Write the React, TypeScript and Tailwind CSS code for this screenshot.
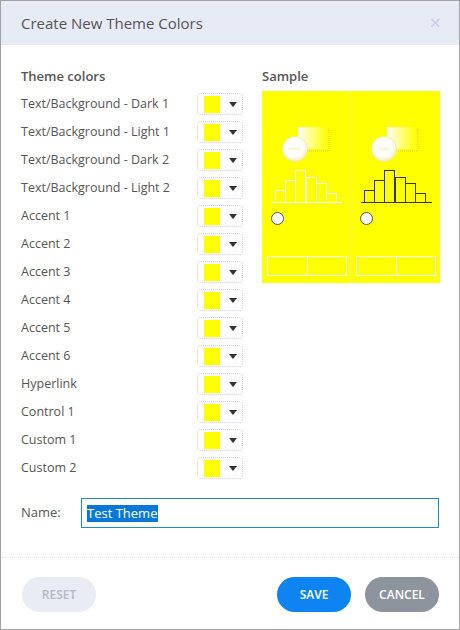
import React from "react";

const rows = [
  "Text/Background - Dark 1",
  "Text/Background - Light 1",
  "Text/Background - Dark 2",
  "Text/Background - Light 2",
  "Accent 1",
  "Accent 2",
  "Accent 3",
  "Accent 4",
  "Accent 5",
  "Accent 6",
  "Hyperlink",
  "Control 1",
  "Custom 1",
  "Custom 2",
];

const bars = [
  { x: 13, top: 99 },
  { x: 23, top: 89 },
  { x: 33, top: 79 },
  { x: 44, top: 86 },
  { x: 54, top: 92 },
  { x: 64, top: 102 },
];

const SamplePanel = ({ stroke, id }: { stroke: string; id: string }) => (
  <svg width="88" height="192" viewBox="0 0 88 192" className="block">
    <defs>
      <linearGradient id={id} x1="0" x2="1" y1="0" y2="0">
        <stop offset="0" stopColor="#ffffff" />
        <stop offset="1" stopColor="#ffff00" />
      </linearGradient>
      <radialGradient id={id + "c"} cx="0.45" cy="0.4" r="0.6">
        <stop offset="0.6" stopColor="#ffffff" />
        <stop offset="1" stopColor="#f4f0c0" />
      </radialGradient>
    </defs>
    <rect x="38" y="38" width="29" height="22" fill="none" stroke="#c9c36a" strokeWidth="0.8" strokeDasharray="1 1" />
    <rect x="36" y="36" width="29" height="22" fill={`url(#${id})`} />
    <circle cx="33" cy="58" r="12.5" fill={`url(#${id}c)`} stroke="#ece8a0" strokeWidth="0.8" />
    <path d="M28 58 q1.2 -1.5 2.4 0 t2.4 0 t2.4 0 t2.4 0" fill="none" stroke="#e8e070" strokeWidth="0.7" />
    {bars.map((b) => (
      <rect key={b.x} x={b.x + 0.5} y={b.top + 0.5} width="10" height={111 - b.top} fill="none" stroke={stroke} strokeWidth="1" />
    ))}
    <line x1="10" x2="81" y1="111.5" y2="111.5" stroke={stroke} strokeWidth="1" />
    <circle cx="15.5" cy="127.5" r="6" fill="#ffffff" stroke="#555555" strokeWidth="1" />
    <rect x="5.5" y="165.5" width="79" height="19" fill="none" stroke="#ffffff" strokeWidth="1" />
    <line x1="45.5" x2="45.5" y1="165.5" y2="184.5" stroke="#ffffff" strokeWidth="1" />
  </svg>
);

const ColorPicker = () => (
  <div className="flex h-[22px] w-[46px] items-center rounded-sm border border-dotted border-[#c9cfdf] bg-white pl-[6px] pr-[5px]">
    <div className="h-[17px] w-[16px] bg-[#ffff00]" />
    <div className="ml-auto h-0 w-0 border-x-[4px] border-t-[5px] border-x-transparent border-t-[#333]" />
  </div>
);

export default function App() {
  return (
    <div
      className="flex h-[630px] w-[460px] flex-col border border-[#a3a3a3] bg-white text-[#555]"
      style={{ fontFamily: "'Open Sans', 'Noto Sans', sans-serif" }}
    >
      <div className="flex h-[44px] shrink-0 items-center justify-between bg-[#e6ebf5] pl-[20px] pr-[18px]">
        <span className="text-[15px] text-[#555]">Create New Theme Colors</span>
        <span className="text-[20px] leading-none text-[#c5cde2]">×</span>
      </div>

      <div className="flex pl-[20px] pt-[22px]">
        <div className="w-[222px]">
          <div className="h-[18px] text-[13px] font-semibold leading-[18px]">Theme colors</div>
          <div className="mt-[5px] flex flex-col">
            {rows.map((r) => (
              <div key={r} className="flex h-[28px] items-center justify-between">
                <span className="text-[12.5px]">{r}</span>
                <ColorPicker />
              </div>
            ))}
          </div>
        </div>
        <div className="ml-[19px]">
          <div className="h-[18px] text-[13px] font-semibold leading-[18px]">Sample</div>
          <div className="mt-[6px] flex w-[178px] bg-[#ffff00]">
            <SamplePanel stroke="#ffffff" id="gl" />
            <div className="w-0 border-l border-dotted border-[#f2f2a8]" />
            <SamplePanel stroke="#333333" id="gr" />
          </div>
        </div>
      </div>

      <div className="mt-[16px] flex items-center pl-[20px]">
        <span className="w-[60px] text-[13px]">Name:</span>
        <div className="flex h-[30px] w-[358px] items-center border border-[#1e88d9] pl-[5px]">
          <span className="bg-[#0a78d7] pr-[1px] text-[13px] leading-[17px] text-white">Test Theme</span>
        </div>
      </div>

      <div className="mt-[29px] border-t border-dotted border-[#e2e4ea]" />

      <div className="flex items-center justify-between pl-[21px] pr-[20px] pt-[19px]">
        <button className="h-[35px] w-[74px] rounded-full bg-[#e9ecf4] text-[12px] font-semibold text-[#b4b8c6]">
          RESET
        </button>
        <div className="flex gap-[14px]">
          <button className="h-[35px] w-[74px] rounded-full bg-[#0d84f2] text-[12px] font-semibold text-white">
            SAVE
          </button>
          <button className="h-[35px] w-[74px] rounded-full bg-[#8d949e] text-[12px] font-semibold text-white">
            CANCEL
          </button>
        </div>
      </div>
    </div>
  );
}
